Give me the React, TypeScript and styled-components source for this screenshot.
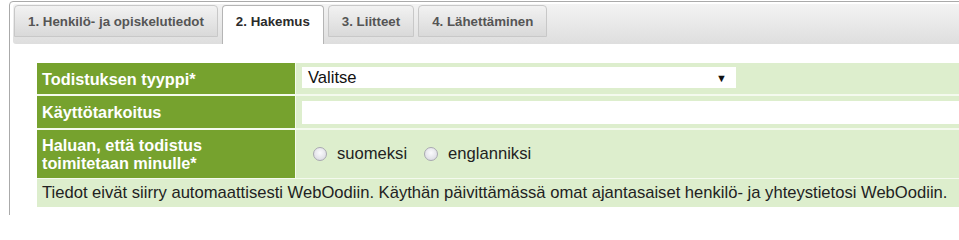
import React from "react"
import styled, { createGlobalStyle } from "styled-components"

const GlobalStyle = createGlobalStyle`
    html, body {
        margin: 0;
        padding: 0;
        background: #fff;
        overflow: hidden;
    }
    body {
        font-family: "Liberation Sans", Arial, sans-serif;
    }
`

// the screenshot cuts the widget off on the right and at the bottom
const Viewport = styled.div`
    width: 100vw;
    height: 215px;
    overflow: hidden;
`

const Frame = styled.div`
    margin: 1px 0 0 9px;
    width: 1010px;
    height: 240px;
    border: 1px solid #aaa;
    border-radius: 4px 4px 0 0;
    padding: 2px 0 0 3px;
    box-sizing: border-box;
`

const TabNav = styled.ul`
    display: flex;
    align-items: flex-end;
    gap: 4px;
    height: 40px;
    margin: 0;
    padding: 0 0 0 1px;
    box-sizing: border-box;
    list-style: none;
    background: linear-gradient(to bottom, #f3f3f3, #dedede);
    border-radius: 3px;
`

const Tab = styled.li<{ $active?: boolean }>`
    display: flex;
    align-items: center;
    box-sizing: border-box;
    height: ${p => (p.$active ? "39px" : "32px")};
    margin-bottom: ${p => (p.$active ? "0" : "7px")};
    padding: ${p => (p.$active ? "0 13px 7px" : "0 13px")};
    border: 1px solid ${p => (p.$active ? "#b5b5b5" : "#c8c8c8")};
    border-bottom: ${p => (p.$active ? "none" : "1px solid #c8c8c8")};
    border-radius: 4px 4px 0 0;
    background: ${p => (p.$active ? "#fff" : "linear-gradient(to bottom, #f2f2f2, #d9d9d9)")};
    color: ${p => (p.$active ? "#2b2b2b" : "#555")};
    font-size: 13.3px;
    font-weight: bold;
    white-space: nowrap;
`

const Panel = styled.div`
    padding: 19px 0 0 24px;
`

const FormGrid = styled.div`
    display: grid;
    grid-template-columns: 258px 1fr;
    grid-template-rows: 31px 32px 48px;
    column-gap: 1px;
    row-gap: 2px;
    background: #f4faee;
    font-size: 16.6px;
`

const LabelCell = styled.div`
    display: flex;
    align-items: center;
    padding: 0 5px;
    background: #76a22e;
    color: #fff;
    font-weight: bold;
    font-size: 16.3px;
    line-height: 18px;
`

const ValueCell = styled.div`
    display: flex;
    align-items: center;
    padding: 0 6px;
    background: #ddeecd;
    color: #111;
`

const SelectBox = styled.div`
    display: flex;
    align-items: center;
    justify-content: space-between;
    width: 434px;
    height: 21px;
    margin-top: -2px;
    padding: 0 6px 0 6px;
    box-sizing: border-box;
    background: #fff;
    color: #111;
`

const Arrow = styled.span`
    font-size: 11px;
    color: #111;
    margin-right: 3px;
`

const TextInput = styled.div`
    flex: 1;
    height: 23px;
    margin-top: 1px;
    background: #fff;
`

const RadioOption = styled.label`
    display: flex;
    align-items: center;
    gap: 10px;
    margin-left: 11px;
    margin-right: 6px;
    color: #222;
`

const RadioDot = styled.span`
    display: inline-block;
    width: 14px;
    height: 14px;
    box-sizing: border-box;
    border-radius: 50%;
    border: 1px solid #a9a9b1;
    background: radial-gradient(circle at 50% 40%, #fbfbfd 0%, #e4e4ea 60%, #d3d3db 100%);
`

const InfoRow = styled.div`
    grid-column: 1 / span 2;
    display: flex;
    align-items: center;
    height: 28px;
    margin-top: -1px;
    padding: 0 5px;
    background: #ddeecd;
    color: #222;
    white-space: nowrap;
`

const tabs = ["1. Henkilö- ja opiskelutiedot", "2. Hakemus", "3. Liitteet", "4. Lähettäminen"]

export default function App() {
    return (
        <Viewport>
            <GlobalStyle />
            <Frame>
                <TabNav>
                    {tabs.map((t, i) => (
                        <Tab key={t} $active={i === 1}>{t}</Tab>
                    ))}
                </TabNav>
                <Panel>
                    <FormGrid>
                        <LabelCell>Todistuksen tyyppi*</LabelCell>
                        <ValueCell>
                            <SelectBox>
                                <span>Valitse</span>
                                <Arrow>▼</Arrow>
                            </SelectBox>
                        </ValueCell>
                        <LabelCell>Käyttötarkoitus</LabelCell>
                        <ValueCell>
                            <TextInput />
                        </ValueCell>
                        <LabelCell>Haluan, että todistus<br />toimitetaan minulle*</LabelCell>
                        <ValueCell>
                            <RadioOption><RadioDot />suomeksi</RadioOption>
                            <RadioOption><RadioDot />englanniksi</RadioOption>
                        </ValueCell>
                        <InfoRow>
                            Tiedot eivät siirry automaattisesti WebOodiin. Käythän päivittämässä omat ajantasaiset henkilö- ja yhteystietosi WebOodiin.
                        </InfoRow>
                    </FormGrid>
                </Panel>
            </Frame>
        </Viewport>
    )
}
